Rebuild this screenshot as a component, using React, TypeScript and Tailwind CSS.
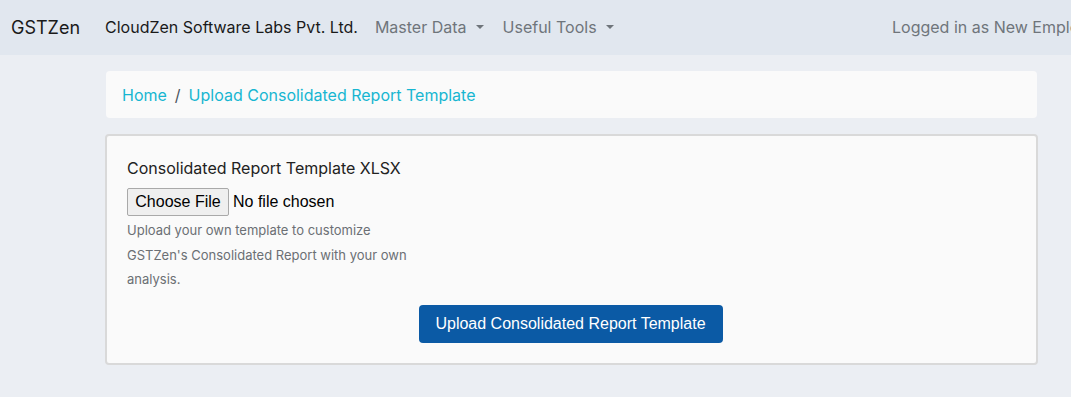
import React from "react";

export default function App() {
  return (
    <div className="min-h-[397px] w-full bg-[#ebeef3]" style={{ fontFamily: "Inter, 'Noto Sans', sans-serif" }}>
      <nav className="h-[55px] bg-[#e1e7ef] flex items-center whitespace-nowrap overflow-hidden pb-[1px]">
        <span className="ml-[11px] text-[18px] text-[#1a1a1a]">GSTZen</span>
        <span className="ml-[25px] text-[16px] text-[#1a1a1a]">CloudZen Software Labs Pvt. Ltd.</span>
        <span className="ml-[17px] text-[16px] text-[#6f757b] flex items-center">
          Master Data
          <span className="ml-[9px] inline-block w-0 h-0 border-l-[4px] border-r-[4px] border-t-[4px] border-l-transparent border-r-transparent border-t-[#6f757b]" />
        </span>
        <span className="ml-[19px] text-[16px] text-[#6f757b] flex items-center">
          Useful Tools
          <span className="ml-[9px] inline-block w-0 h-0 border-l-[4px] border-r-[4px] border-t-[4px] border-l-transparent border-r-transparent border-t-[#6f757b]" />
        </span>
        <span className="ml-auto text-[16px] text-[#6f757b] w-[179px] overflow-hidden">Logged in as New Employee</span>
      </nav>
      <div className="pl-[106px] pr-[34px] pt-[16px]">
        <div className="h-[47px] bg-[#fafafa] rounded-[4px] flex items-center px-[16px] text-[16px] text-[#17b6d1]">
          <span>Home</span>
          <span className="mx-[8px] text-[#4a5560]">/</span>
          <span>Upload Consolidated Report Template</span>
        </div>
        <div className="mt-[16px] -ml-[1px] -mr-[1px] h-[231px] bg-[#fafafa] border-2 border-[#d9d9d9] rounded-[4px] px-[20px] pt-[21px]">
          <div className="text-[16px] text-[#222] leading-[22px]">Consolidated Report Template XLSX</div>
          <div className="mt-[9px] flex items-center" style={{ fontFamily: "'Liberation Sans', Arial, sans-serif" }}>
            <span className="h-[28px] w-[102px] border border-[#a9a9a9] bg-[#efefef] rounded-[2px] flex items-center justify-center text-[16px] text-black">Choose File</span>
            <span className="ml-[4px] text-[16px] text-black">No file chosen</span>
          </div>
          <div className="mt-[2px] w-[285px] text-[13px] leading-[24.5px] text-[#6b6f74]">
            Upload your own template to customize GSTZen's Consolidated Report with your own analysis.
          </div>
          <div className="mt-[13px] flex justify-center">
            <button className="h-[38px] w-[304px] bg-[#0b5aa5] rounded-[4px] text-white text-[16px] font-medium -translate-x-[1px]" style={{ fontFamily: "'Liberation Sans', Arial, sans-serif" }}>
              Upload Consolidated Report Template
            </button>
          </div>
        </div>
      </div>
    </div>
  );
}
